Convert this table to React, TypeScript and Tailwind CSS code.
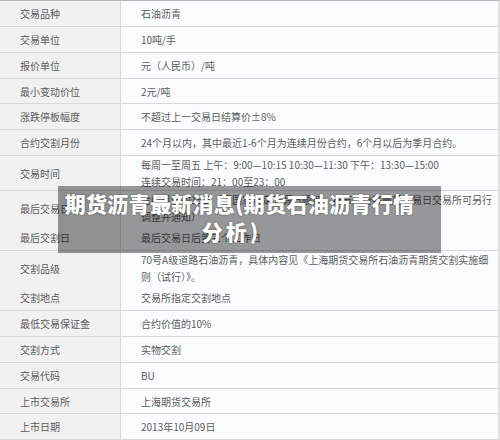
const rows: { label: string; value: string[]; h: string }[] = [
  { label: "交易品种", value: ["石油沥青"], h: "h-[26px]" },
  { label: "交易单位", value: ["10吨/手"], h: "h-[26px]" },
  { label: "报价单位", value: ["元（人民币）/吨"], h: "h-[26px]" },
  { label: "最小变动价位", value: ["2元/吨"], h: "h-[25px]" },
  { label: "涨跌停板幅度", value: ["不超过上一交易日结算价±8%"], h: "h-[26px]" },
  {
    label: "合约交割月份",
    value: ["24个月以内，其中最近1-6个月为连续月份合约，6个月以后为季月合约。"],
    h: "h-[26px]",
  },
  {
    label: "交易时间",
    value: [
      "每周一至周五 上午：9:00—10:15 10:30—11:30 下午：13:30—15:00",
      "连续交易时间：21：00至23：00",
    ],
    h: "h-[35px]",
  },
  {
    label: "最后交易日",
    value: ["合约月份的15日（遇国家法定节假日顺延，春节月份等最后交易日交易所可另行", "调整并通知）"],
    h: "h-[34px]",
  },
  { label: "最后交割日", value: ["最后交易日后第三个工作日"], h: "h-[26px]" },
  {
    label: "交割品级",
    value: ["70号A级道路石油沥青，具体内容见《上海期货交易所石油沥青期货交割实施细", "则（试行）》。"],
    h: "h-[34px]",
  },
  { label: "交割地点", value: ["交易所指定交割地点"], h: "h-[26px]" },
  { label: "最低交易保证金", value: ["合约价值的10%"], h: "h-[26px]" },
  { label: "交割方式", value: ["实物交割"], h: "h-[26px]" },
  { label: "交易代码", value: ["BU"], h: "h-[26px]" },
  { label: "上市交易所", value: ["上海期货交易所"], h: "h-[25px]" },
  { label: "上市日期", value: ["2013年10月09日"], h: "h-[26px]" },
];

export default function App() {
  return (
    <div className="relative w-[500px] h-[440px] overflow-hidden bg-white font-['Noto_Sans_CJK_SC','Noto_Sans',sans-serif]">
      <div className="w-[500px] border-t border-[#b4b4b4] border-r-2 border-r-[#e2e2e2]">
        {rows.map((r) => (
          <div
            key={r.label}
            className={`grid grid-cols-[121px_1fr] border-b border-[#d8d8d8] ${r.h}`}
          >
            <div className="flex items-center bg-[#f1f1f1] border-r border-[#dadada] pl-5 text-[10px] text-[#5c5c5c] whitespace-nowrap">
              {r.label}
            </div>
            <div className="flex flex-col justify-center bg-[#fbfcfe] pl-5 text-[10px] leading-[17px] text-[#5c5c5c] whitespace-nowrap">
              {r.value.map((v) => (
                <span key={v}>{v}</span>
              ))}
            </div>
          </div>
        ))}
      </div>

      <div className="absolute left-[58px] top-[186px] w-[383px] h-[67px] bg-black/40 pt-[3px] pr-[20px] text-center text-white font-extrabold text-[21px] leading-[28px] tracking-[0.3px] [text-shadow:0_0_2px_rgba(0,0,0,0.45)]">
        <div className="whitespace-nowrap">期货沥青最新消息(期货石油沥青行情</div>
        <div className="pr-4 tracking-[3px]">分析)</div>
      </div>
    </div>
  );
}
